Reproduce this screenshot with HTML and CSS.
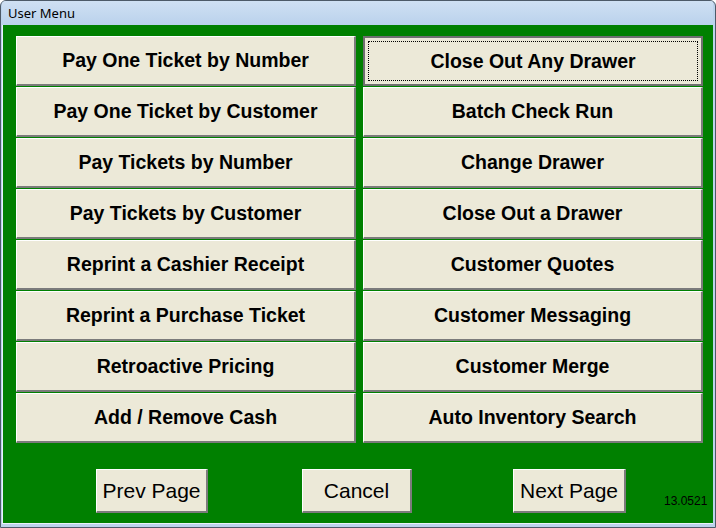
FILE: index.html
```html
<!DOCTYPE html>
<html>
<head>
<meta charset="utf-8">
<link rel="stylesheet" href="styles.css">
</head>
<body>
<div class="window">
  <div class="titlebar">User Menu</div>
  <div class="client">
    <div class="menu-grid">
      <button class="menu-btn">Pay One Ticket by Number</button>
      <button class="menu-btn focused"><span class="focus-ring">Close Out Any Drawer</span></button>
      <button class="menu-btn">Pay One Ticket by Customer</button>
      <button class="menu-btn">Batch Check Run</button>
      <button class="menu-btn">Pay Tickets by Number</button>
      <button class="menu-btn">Change Drawer</button>
      <button class="menu-btn">Pay Tickets by Customer</button>
      <button class="menu-btn">Close Out a Drawer</button>
      <button class="menu-btn">Reprint a Cashier Receipt</button>
      <button class="menu-btn">Customer Quotes</button>
      <button class="menu-btn">Reprint a Purchase Ticket</button>
      <button class="menu-btn">Customer Messaging</button>
      <button class="menu-btn">Retroactive Pricing</button>
      <button class="menu-btn">Customer Merge</button>
      <button class="menu-btn">Add / Remove Cash</button>
      <button class="menu-btn">Auto Inventory Search</button>
    </div>
    <div class="footer">
      <button class="nav-btn prev">Prev Page</button>
      <button class="nav-btn cancel">Cancel</button>
      <button class="nav-btn next">Next Page</button>
      <span class="version">13.0521</span>
    </div>
  </div>
</div>
</body>
</html>
```
FILE: styles.css
```css
html, body {
  margin: 0;
  padding: 0;
  background: #ffffff;
}
.window {
  width: 716px;
  height: 528px;
  box-sizing: border-box;
  border: 1px solid #4d5a68;
  border-radius: 6px 6px 0 0;
  background: #bcd3ec;
  padding: 0 2px 3px 1px;
  display: flex;
  flex-direction: column;
  overflow: hidden;
}
.titlebar {
  height: 24px;
  line-height: 24px;
  padding-left: 6px;
  font-family: "Noto Sans", "Open Sans", sans-serif;
  font-size: 13px;
  color: #000;
  background: linear-gradient(#cfe0f3, #bad2ec);
}
.client {
  flex: 1;
  background: #008000;
  border-left: 1px solid #e9f2fb;
  border-bottom: 1px solid #e9f2fb;
  padding: 11px 10px 0 13px;
  display: flex;
  flex-direction: column;
}
.menu-grid {
  display: grid;
  grid-template-columns: 340px 340px;
  grid-auto-rows: 50px;
  column-gap: 7px;
  row-gap: 1px;
}
.menu-btn, .nav-btn {
  background: #ece9d8;
  border-style: solid;
  border-width: 1px 2px 2px 1px;
  border-color: #ffffff #7b7b7b #7b7b7b #ffffff;
  margin: 0;
  padding: 0;
  color: #000;
  cursor: default;
}
.menu-btn {
  font-family: "Liberation Sans", Arial, sans-serif;
  font-weight: bold;
  font-size: 19.5px;
}
.menu-btn.focused {
  border-width: 2px;
  border-color: #6f6f6f;
  padding: 3px;
}
.focus-ring {
  display: flex;
  align-items: center;
  justify-content: center;
  height: 100%;
  box-sizing: border-box;
  border: 1px dotted #000;
}
.footer {
  display: flex;
  align-items: flex-start;
  margin-top: 26px;
  padding-left: 80px;
}
.footer > * {
  flex-shrink: 0;
  white-space: nowrap;
}
.nav-btn {
  height: 44px;
  font-family: "Liberation Sans", Arial, sans-serif;
  font-size: 21px;
}
.prev { width: 112px; }
.cancel { width: 110px; margin-left: 94px; }
.next { width: 113px; margin-left: 101px; }
.version {
  margin-left: 38px;
  margin-top: 25px;
  font-family: "Liberation Sans", Arial, sans-serif;
  font-size: 12px;
  color: #000;
}
```
